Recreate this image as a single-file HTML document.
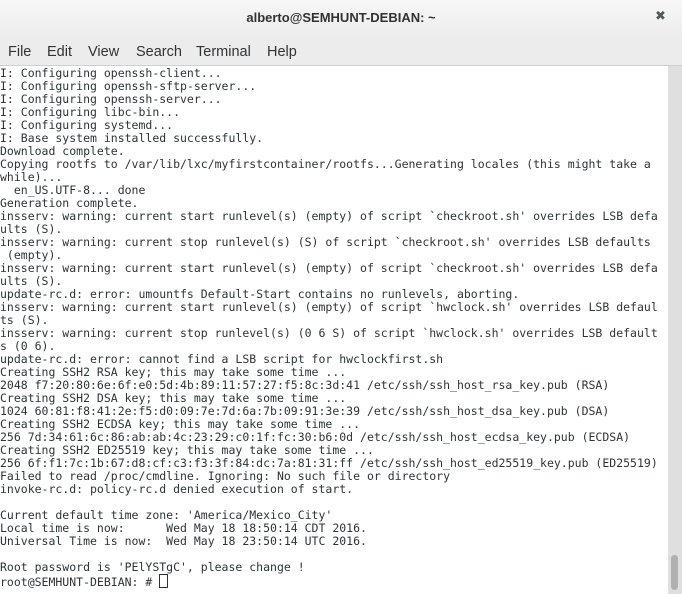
<!DOCTYPE html>
<html><head><style>
html,body{margin:0;padding:0;width:682px;height:594px;overflow:hidden;background:#fff;}
.title{position:absolute;left:0;top:0;width:682px;height:38px;background:linear-gradient(#f7f7f7,#ececec);}
.title .t{position:absolute;left:0;width:682px;top:10px;text-align:center;font:bold 13px "Liberation Sans",sans-serif;color:#2e3436;}
.title .x{position:absolute;left:655px;top:9px;font:bold 13px "DejaVu Sans",sans-serif;color:#4f5a5e;}
.menu{position:absolute;left:0;top:38px;width:682px;height:27px;background:#ececec;border-bottom:1px solid #d0d0d0;font:14.5px "Liberation Sans",sans-serif;color:#2e3436;}
.menu span{position:absolute;top:6px;}
pre{position:absolute;left:0;top:67px;margin:0;font:11.5px/13px "DejaVu Sans Mono",monospace;color:#2e3436;white-space:pre;}
.sb{position:absolute;left:668px;top:66px;width:14px;height:528px;background:#dfdfdf;}
.th{position:absolute;left:671px;top:555px;width:7px;height:35px;background:#b0b0b0;border-radius:4px;}
.cur{display:inline-block;width:7px;height:12px;border:1px solid #2e3436;vertical-align:-2px;}
</style></head><body>
<div class="title"><div class="t">alberto@SEMHUNT-DEBIAN: ~</div><div class="x">✖</div></div>
<div class="menu"><span style="left:8px">File</span><span style="left:47px">Edit</span><span style="left:88px">View</span><span style="left:136px">Search</span><span style="left:196px">Terminal</span><span style="left:267px">Help</span></div>
<pre>I: Configuring openssh-client...
I: Configuring openssh-sftp-server...
I: Configuring openssh-server...
I: Configuring libc-bin...
I: Configuring systemd...
I: Base system installed successfully.
Download complete.
Copying rootfs to /var/lib/lxc/myfirstcontainer/rootfs...Generating locales (this might take a
while)...
  en_US.UTF-8... done
Generation complete.
insserv: warning: current start runlevel(s) (empty) of script `checkroot.sh' overrides LSB defa
ults (S).
insserv: warning: current stop runlevel(s) (S) of script `checkroot.sh' overrides LSB defaults
 (empty).
insserv: warning: current start runlevel(s) (empty) of script `checkroot.sh' overrides LSB defa
ults (S).
update-rc.d: error: umountfs Default-Start contains no runlevels, aborting.
insserv: warning: current start runlevel(s) (empty) of script `hwclock.sh' overrides LSB defaul
ts (S).
insserv: warning: current stop runlevel(s) (0 6 S) of script `hwclock.sh' overrides LSB default
s (0 6).
update-rc.d: error: cannot find a LSB script for hwclockfirst.sh
Creating SSH2 RSA key; this may take some time ...
2048 f7:20:80:6e:6f:e0:5d:4b:89:11:57:27:f5:8c:3d:41 /etc/ssh/ssh_host_rsa_key.pub (RSA)
Creating SSH2 DSA key; this may take some time ...
1024 60:81:f8:41:2e:f5:d0:09:7e:7d:6a:7b:09:91:3e:39 /etc/ssh/ssh_host_dsa_key.pub (DSA)
Creating SSH2 ECDSA key; this may take some time ...
256 7d:34:61:6c:86:ab:ab:4c:23:29:c0:1f:fc:30:b6:0d /etc/ssh/ssh_host_ecdsa_key.pub (ECDSA)
Creating SSH2 ED25519 key; this may take some time ...
256 6f:f1:7c:1b:67:d8:cf:c3:f3:3f:84:dc:7a:81:31:ff /etc/ssh/ssh_host_ed25519_key.pub (ED25519)
Failed to read /proc/cmdline. Ignoring: No such file or directory
invoke-rc.d: policy-rc.d denied execution of start.

Current default time zone: 'America/Mexico_City'
Local time is now:      Wed May 18 18:50:14 CDT 2016.
Universal Time is now:  Wed May 18 23:50:14 UTC 2016.

Root password is 'PElYSTgC', please change !
root@SEMHUNT-DEBIAN: # <span class="cur"></span></pre>
<div class="sb"></div><div class="th"></div>
</body></html>
